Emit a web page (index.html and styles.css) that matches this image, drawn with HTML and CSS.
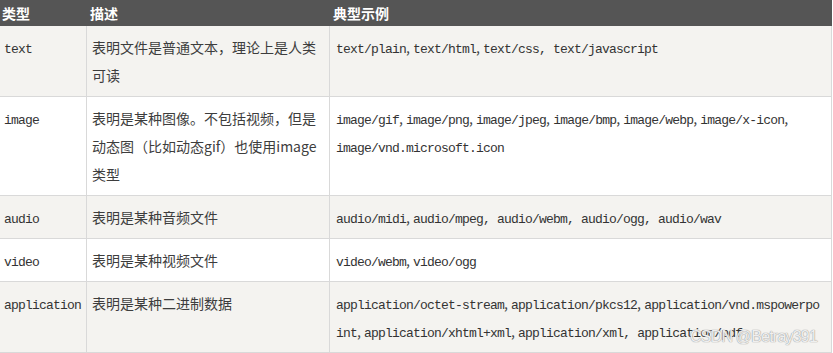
FILE: index.html
```html
<!DOCTYPE html>
<html lang="zh">
<head>
<meta charset="utf-8">
<title>MIME 类型</title>
<link rel="stylesheet" href="styles.css">
</head>
<body>
<div class="wrap">
  <table class="mime">
    <colgroup>
      <col class="c-type">
      <col class="c-desc">
      <col class="c-ex">
    </colgroup>
    <thead>
      <tr><th>类型</th><th>描述</th><th>典型示例</th></tr>
    </thead>
    <tbody>
      <tr class="odd">
        <td class="tp"><code>text</code></td>
        <td>表明文件是普通文本，理论上是人类可读</td>
        <td class="ex"><code>text/plain</code>, <code>text/html</code>, <code>text/css, text/javascript</code></td>
      </tr>
      <tr>
        <td class="tp"><code>image</code></td>
        <td>表明是某种图像。不包括视频，但是动态图（比如动态gif）也使用image类型</td>
        <td class="ex"><code>image/gif</code>, <code>image/png</code>, <code>image/jpeg</code>, <code>image/bmp</code>, <code>image/webp</code>, <code>image/x-icon</code>, <code>image/vnd.microsoft.icon</code></td>
      </tr>
      <tr class="odd">
        <td class="tp"><code>audio</code></td>
        <td>表明是某种音频文件</td>
        <td class="ex"><code>audio/midi</code>, <code>audio/mpeg, audio/webm, audio/ogg, audio/wav</code></td>
      </tr>
      <tr>
        <td class="tp"><code>video</code></td>
        <td>表明是某种视频文件</td>
        <td class="ex"><code>video/webm</code>, <code>video/ogg</code></td>
      </tr>
      <tr class="odd">
        <td class="tp"><code>application</code></td>
        <td>表明是某种二进制数据</td>
        <td class="ex brk"><code>application/octet-stream</code>, <code>application/pkcs12</code>, <code>application/vnd.mspowerpoint</code>, <code>application/xhtml+xml</code>, <code>application/xml, application/pdf</code></td>
      </tr>
    </tbody>
  </table>
  <div class="mark">CSDN @Betray391</div>
</div>
</body>
</html>
```

FILE: styles.css
```css
html, body {
  margin: 0;
  padding: 0;
  background: #ffffff;
}

.wrap {
  position: relative;
  width: 833px;
  height: 353px;
  overflow: hidden;
}

.mime {
  border-collapse: separate;
  border-spacing: 0;
  table-layout: fixed;
  width: 832px;
  font-family: "Noto Sans CJK SC", "Noto Sans", sans-serif;
  font-size: 14px;
  color: #3d3d3d;
}

.c-type { width: 87px; }
.c-desc { width: 243px; }
.c-ex { width: 502px; }

.mime th {
  background: #555555;
  color: #ffffff;
  font-weight: bold;
  text-align: left;
  height: 26px;
  line-height: 26px;
  padding: 0 3px;
  border-right: 1px solid #555555;
  box-sizing: border-box;
}

.mime th:first-child {
  padding-left: 2px;
}

.mime td {
  padding: 7px 5px;
  line-height: 28px;
  vertical-align: top;
  border-right: 1px solid #d9d9d9;
  border-bottom: 1px solid #d9d9d9;
  background: #ffffff;
  word-wrap: break-word;
}

.mime td.tp {
  padding-left: 4px;
  padding-right: 2px;
  white-space: nowrap;
}

.mime tr.odd td {
  background: #f4f3f0;
}

.mime td.ex {
  padding-left: 6px;
  padding-right: 6px;
}

.mime td.brk code {
  word-break: break-all;
}

.mime code {
  font-family: "Liberation Mono", "DejaVu Sans Mono", monospace;
  font-size: 13px;
  line-height: 1;
  letter-spacing: -0.8px;
  color: #333333;
}

.mark {
  position: absolute;
  right: 16px;
  top: 328px;
  font-family: "Liberation Sans", Arial, sans-serif;
  font-size: 16px;
  line-height: 18px;
  letter-spacing: -0.8px;
  color: rgba(255, 255, 255, 0.85);
  text-shadow: 0 0 1px #9a9a9a, 0 0 1px #9a9a9a;
  white-space: nowrap;
}
```
